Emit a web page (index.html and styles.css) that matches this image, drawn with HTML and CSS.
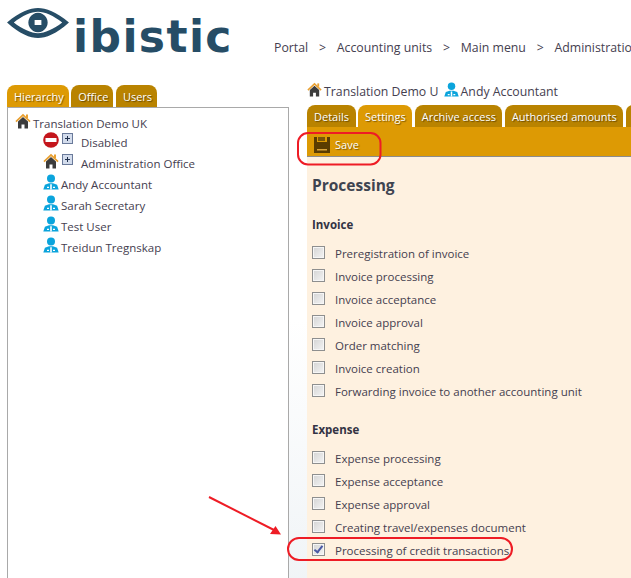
FILE: index.html
```html
<!DOCTYPE html>
<html lang="en">
<head>
    <meta charset="UTF-8">
    <meta name="viewport" content="width=device-width, initial-scale=1.0">
    <title>Ibistic - Settings</title>
    <link rel="stylesheet" href="styles.css">
</head>
<body>
    <svg class="defs" width="0" height="0">
        <symbol id="house" viewBox="0 0 16 16">
            <path d="M3 8.5V15.5h3.5v-4h3v4H13V8.500L8 4z" fill="#3c3c3c"/>
            <path d="M11 1.500h2v3.500h-2z" fill="#e8a032"/>
            <path d="M0.4 8L8 0.8 15.6 8l-1.1 1.2L8 3.2 1.500 9.2z" fill="#e8a032"/>
        </symbol>
        <symbol id="user" viewBox="0 0 16 16">
            <circle cx="8" cy="4.4" r="4" fill="#0ba4dc"/>
            <path d="M0.3 15.5l1.6-4.8L6 9.2h4l4.1 1.5 1.6 4.8z" fill="#0ba4dc"/>
            <path d="M7.2 10.2h1.600v5.300H7.2zM4 12.8h2v1.200H4zM10 12.8h2v1.200h-2z" fill="#fff"/>
        </symbol>
        <symbol id="plus" viewBox="0 0 11 11">
            <rect x="0.5" y="0.5" width="10" height="10" fill="#d3dcec" stroke="#6a7a9a"/>
            <path d="M3 5.500h5M5.500 3v5" stroke="#20304c" fill="none"/>
        </symbol>
    </svg>

    <header class="header">
        <div class="logo">
            <svg class="logo-eye" width="62" height="30" viewBox="0 0 64 31">
                <path d="M0 15C13 4 24 0 32 0s19 4 32 15C51 27 40 31 32 31S13 27 0 15zM7 15c9 7 18 11 25 11s16-4 25-11C48 8 39 4 32 4S16 8 7 15z" fill="#264d66" fill-rule="evenodd"/>
                <path d="M32 5a10 10 0 1 0 .01 0zM28.500 12.500h7v5h-7z" fill="#264d66" fill-rule="evenodd"/>
            </svg>
            <span class="logo-text">ibistic</span>
        </div>
        <nav class="crumbs">
            <span>Portal</span><b>&gt;</b><span>Accounting units</span><b>&gt;</b><span>Main menu</span><b>&gt;</b><span>Administration</span>
        </nav>
    </header>

    <div class="columns">
        <aside class="left">
            <div class="tabs">
                <a class="tab active">Hierarchy</a>
                <a class="tab">Office</a>
                <a class="tab">Users</a>
            </div>
            <div class="tree">
                <div class="root"><svg class="icon"><use href="#house"/></svg>Translation Demo UK</div>
                <div class="node">
                    <svg class="icon" viewBox="0 0 16 16"><circle cx="8" cy="8" r="7.8" fill="#c4161c"/><rect x="2.5" y="6" width="11" height="4" fill="#fff"/></svg>
                    <svg class="plus"><use href="#plus"/></svg>
                    <span class="node-name">Disabled</span>
                </div>
                <div class="node">
                    <svg class="icon"><use href="#house"/></svg>
                    <svg class="plus"><use href="#plus"/></svg>
                    <span class="node-name">Administration Office</span>
                </div>
                <div class="node"><svg class="icon"><use href="#user"/></svg>Andy Accountant</div>
                <div class="node"><svg class="icon"><use href="#user"/></svg>Sarah Secretary</div>
                <div class="node"><svg class="icon"><use href="#user"/></svg>Test User</div>
                <div class="node"><svg class="icon"><use href="#user"/></svg>Treidun Tregnskap</div>
            </div>
        </aside>

        <div class="gutter"></div>

        <main class="right">
            <div class="title">
                <svg class="icon"><use href="#house"/></svg>Translation Demo U
                <svg class="icon title-user"><use href="#user"/></svg>Andy Accountant
            </div>
            <div class="tabs">
                <a class="tab">Details</a>
                <a class="tab active">Settings</a>
                <a class="tab">Archive access</a>
                <a class="tab">Authorised amounts</a>
                <a class="tab tab-more"></a>
            </div>
            <div class="toolbar">
                <svg class="save-icon" width="16" height="16" viewBox="0 0 16 16">
                    <path d="M0 0h3v5h10V0h3v16H0z" fill="#5a3c00"/>
                    <rect x="4" y="0" width="7" height="4" fill="#7a5608"/>
                    <rect x="3" y="12" width="10" height="1.500" fill="#d8a23a"/>
                </svg>
                <span>Save</span>
            </div>
            <div class="content">
                <h2>Processing</h2>
                <h3>Invoice</h3>
                <label class="row"><input type="checkbox">Preregistration of invoice</label>
                <label class="row"><input type="checkbox">Invoice processing</label>
                <label class="row"><input type="checkbox">Invoice acceptance</label>
                <label class="row"><input type="checkbox">Invoice approval</label>
                <label class="row"><input type="checkbox">Order matching</label>
                <label class="row"><input type="checkbox">Invoice creation</label>
                <label class="row"><input type="checkbox">Forwarding invoice to another accounting unit</label>
                <h3 class="second">Expense</h3>
                <label class="row"><input type="checkbox">Expense processing</label>
                <label class="row"><input type="checkbox">Expense acceptance</label>
                <label class="row"><input type="checkbox">Expense approval</label>
                <label class="row"><input type="checkbox">Creating travel/expenses document</label>
                <label class="row"><input type="checkbox" checked>Processing of credit transactions</label>
            </div>
        </main>
    </div>

    <svg class="marks" width="631" height="578" viewBox="0 0 631 578">
        <rect x="298" y="133" width="82.5" height="31.5" rx="10" fill="none" stroke="#ee1c25" stroke-width="2"/>
        <rect x="288" y="538" width="224" height="22" rx="11" fill="none" stroke="#ee1c25" stroke-width="2"/>
        <path d="M209 497L276 531" stroke="#ee1c25" stroke-width="2"/>
        <path d="M281 534.5L270 534L275.500 526z" fill="#ee1c25"/>
    </svg>
</body>
</html>
```

FILE: styles.css
```css
html, body {
    height: 578px;
    overflow: hidden;
}
body {
    font-family: "Open Sans", "Noto Sans", sans-serif;
    font-size: 11.5px;
    color: #45404f;
    background-color: #ffffff;
    margin: 0;
    position: relative;
}
.defs {
    position: absolute;
}
.header {
    height: 85px;
    position: relative;
}
.logo {
    display: flex;
    padding: 8px 0 0 7px;
}
.logo-text {
    font-family: "DejaVu Sans", sans-serif;
    font-weight: bold;
    font-size: 44px;
    line-height: 50px;
    letter-spacing: 1.4px;
    color: #264d66;
    margin: 4px 0 0 4px;
}
.crumbs {
    position: absolute;
    left: 274px;
    top: 39px;
    white-space: nowrap;
    line-height: 18px;
    font-size: 12.3px;
}
.crumbs b {
    font-weight: normal;
    margin: 0 10.8px;
}
.columns {
    display: grid;
    grid-template-columns: 282px 18px 324px;
    padding-left: 7px;
}
.gutter {
    background: linear-gradient(to bottom, #ffffff 45%, #eff3f6 100%);
}
.tabs {
    display: flex;
    gap: 2.5px;
    white-space: nowrap;
    height: 22px;
    overflow: hidden;
}
.tab {
    display: block;
    height: 22px;
    line-height: 23px;
    padding: 0 6.5px 0 7px;
    font-size: 11px;
    color: #ffffff;
    background-color: #b98300;
    border-radius: 8px 8px 0 0;
    text-shadow: 1px 1px 1px rgba(0, 0, 0, 0.45);
}
.tab.active {
    background-color: #dd9a04;
}
.left .tab {
    padding-right: 5px;
}
.tab-more {
    width: 40px;
}
.tree {
    height: 480px;
    border: 1px solid #a9a9a9;
    box-sizing: border-box;
    padding: 5px 0 0 7px;
}
.icon {
    width: 16px;
    height: 16px;
    vertical-align: -1px;
    margin-right: 2px;
}
.root {
    height: 19px;
    line-height: 21px;
}
.node {
    height: 21px;
    line-height: 21px;
    padding-left: 28px;
}
.plus {
    width: 11px;
    height: 11px;
    vertical-align: 3px;
    margin-left: -2px;
}
.node-name {
    margin-left: 5px;
}
.right {
    margin-top: -3px;
    min-width: 0;
}
.title {
    height: 23px;
    line-height: 14px;
    white-space: nowrap;
    font-size: 12.3px;
}
.title .icon {
    width: 15px;
    height: 15px;
}
.title-user {
    margin-left: 2px;
}
.toolbar {
    height: 30px;
    box-sizing: border-box;
    background-color: #dd9a04;
    border-bottom: 1px solid #8c8c8c;
    padding: 6px 0 0 7px;
    display: flex;
    align-items: center;
    gap: 5px;
    color: #ffffff;
    font-size: 11px;
    text-shadow: 1px 1px 1px rgba(0, 0, 0, 0.45);
}
.content {
    background-color: #fef1e0;
    height: 430px;
    padding: 18px 0 0 5px;
}
.content h2 {
    margin: 0 0 21px;
    font-size: 15.5px;
    line-height: 20px;
    font-weight: bold;
    color: #3e4450;
}
.content h3 {
    margin: 0 0 9px;
    font-size: 11.5px;
    line-height: 17px;
    font-weight: bold;
    color: #333344;
}
.content h3.second {
    margin-top: 18px;
}
.row {
    display: flex;
    align-items: center;
    height: 23px;
    white-space: nowrap;
}
.row input {
    appearance: none;
    position: relative;
    box-sizing: border-box;
    width: 13px;
    height: 13px;
    margin: 0 10px 3px 0;
    border: 1px solid #8e8f8f;
    background: linear-gradient(135deg, #d4d4d4, #f4f4f4);
    box-shadow: inset 0 0 0 1px #f6f6f6;
}
.row input:checked::after {
    content: "";
    position: absolute;
    left: 3px;
    top: 0;
    width: 3px;
    height: 7px;
    border: solid #4a58a4;
    border-width: 0 2px 2px 0;
    transform: rotate(38deg);
}
.marks {
    position: absolute;
    left: 0;
    top: 0;
    pointer-events: none;
}
```
